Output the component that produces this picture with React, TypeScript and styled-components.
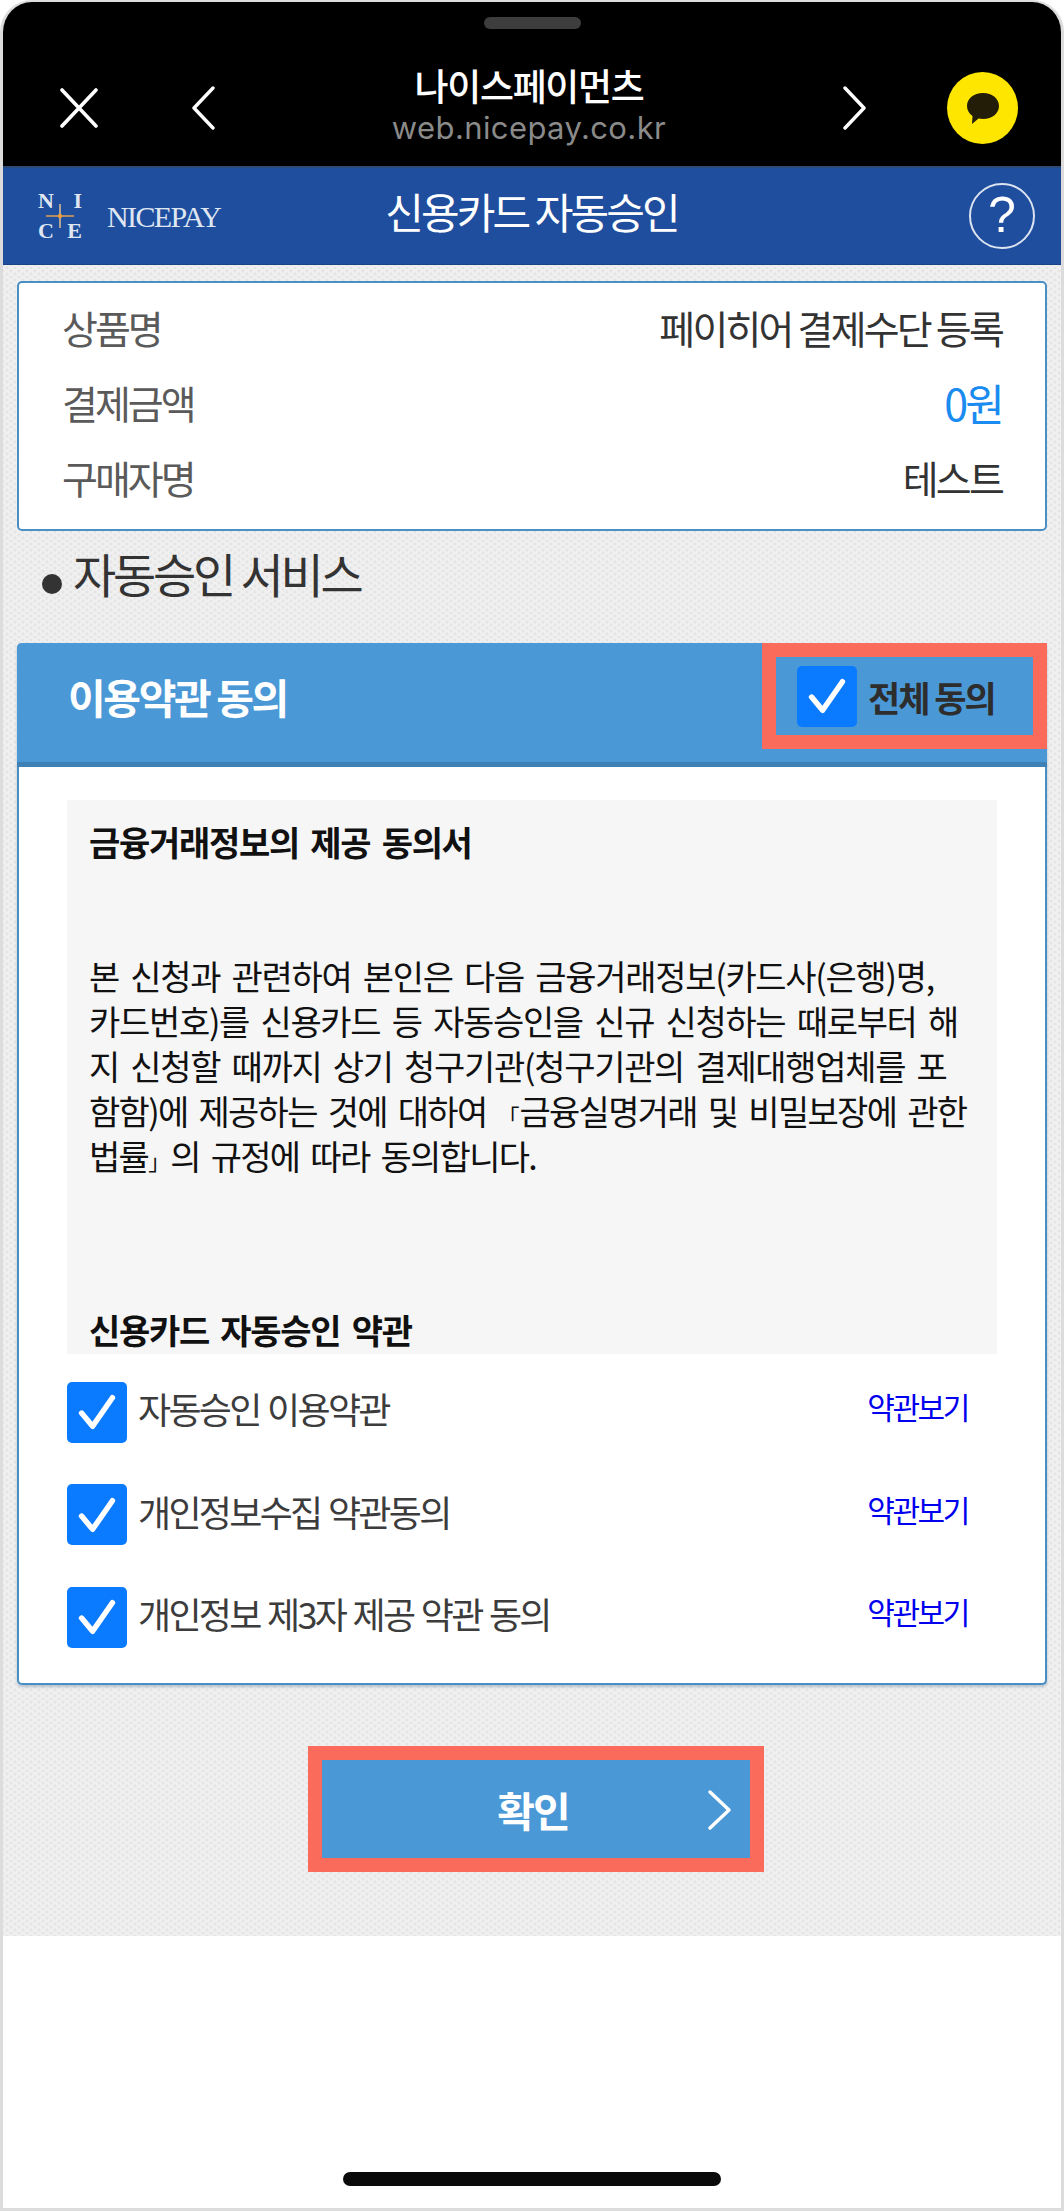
import React from 'react';
import styled, { createGlobalStyle } from 'styled-components';

const KR = `'Noto Sans CJK KR', 'Noto Sans', sans-serif`;

const GlobalStyle = createGlobalStyle`
  html, body {
    margin: 0;
    padding: 0;
    background: #fff;
  }
  * {
    box-sizing: border-box;
  }
`;

const Phone = styled.div`
  width: 1064px;
  height: 2211px;
  display: flex;
  flex-direction: column;
  border: solid #dcdcdc;
  border-width: 2px 3px 3px 3px;
  border-radius: 32px 32px 0 0;
  overflow: hidden;
  font-family: ${KR};
  background: #fff;
`;

const TopBar = styled.header`
  height: 164px;
  flex-shrink: 0;
  background: #000;
  padding-top: 15px;
  display: flex;
  flex-direction: column;
  align-items: center;
`;

const Pill = styled.div`
  width: 97px;
  height: 12px;
  border-radius: 6px;
  background: #3d3d3d;
`;

const TopRow = styled.div`
  width: 100%;
  display: flex;
  align-items: center;
  justify-content: space-between;
  padding: 0 43px 0 56px;
  margin-top: 37px;
`;

const IconGroup = styled.div<{ $gap: number }>`
  display: flex;
  align-items: center;
  gap: ${(p) => p.$gap}px;
`;

const SiteInfo = styled.div`
  display: flex;
  flex-direction: column;
  align-items: center;
  margin-top: -2px;
`;

const SiteName = styled.div`
  color: #fff;
  font-size: 37px;
  line-height: 43px;
  font-weight: 500;
  letter-spacing: -1.3px;
`;

const SiteUrl = styled.div`
  color: #8a8a8a;
  font-family: Inter, 'Liberation Sans', sans-serif;
  font-size: 31px;
  line-height: 42px;
  letter-spacing: 0.4px;
`;

const KakaoBadge = styled.div`
  width: 71px;
  height: 72px;
  border-radius: 50%;
  background: #ffe600;
  display: flex;
  align-items: center;
  justify-content: center;
`;

const TitleBar = styled.div`
  height: 99px;
  flex-shrink: 0;
  display: grid;
  grid-template-columns: 1fr auto 1fr;
  align-items: center;
  background: #1f4e9e;
  border-top: 2px solid #2c4a78;
  border-bottom: 1px solid #1a4389;
  padding: 0 26px 0 35px;
`;

const Logo = styled.div`
  display: flex;
  align-items: center;
  gap: 25px;
  color: #dfe6f2;
  font-family: 'Liberation Serif', serif;
`;

const LogoMark = styled.div`
  position: relative;
  width: 44px;
  height: 48px;
  display: grid;
  grid-template-columns: 1fr 1fr;
  align-content: space-between;
  font-size: 22px;
  line-height: 18px;
  font-weight: 700;
`;

const LogoLetter = styled.span<{ $right?: boolean }>`
  text-align: ${(p) => (p.$right ? 'right' : 'left')};
`;

const LogoStar = styled.svg`
  position: absolute;
  left: 8px;
  top: 12px;
`;

const LogoWord = styled.span`
  font-size: 30px;
  letter-spacing: -1.6px;
  line-height: 30px;
  margin-top: 2px;
`;

const PageTitle = styled.h1`
  margin: -10px 10px 0 0;
  color: #fff;
  font-size: 42px;
  line-height: 50px;
  font-weight: 400;
  letter-spacing: -2.9px;
`;

const HelpButton = styled.div`
  justify-self: end;
  width: 66px;
  height: 66px;
  border: 2px solid #dbe3f0;
  border-radius: 50%;
  color: #fff;
  font-family: 'Liberation Sans', sans-serif;
  font-size: 50px;
  line-height: 60px;
  text-align: center;
`;

const Body = styled.main`
  height: 1671px;
  flex-shrink: 0;
  padding: 16px 14px 0;
  background-color: #f0f0f0;
  background-image:
    radial-gradient(circle, #e5e5e5 1.3px, transparent 1.8px),
    radial-gradient(circle, #e5e5e5 1.3px, transparent 1.8px);
  background-size: 8px 6px;
  background-position: 0 0, 4px 3px;
`;

const SummaryCard = styled.section`
  height: 250px;
  padding: 0 43px 8px;
  display: flex;
  flex-direction: column;
  justify-content: center;
  gap: 21px;
  background: #fff;
  border: 2px solid #4a8fc4;
  border-radius: 5px;
`;

const SummaryRow = styled.div`
  display: flex;
  justify-content: space-between;
  align-items: center;
  height: 54px;
`;

const SummaryLabel = styled.span`
  color: #5a5a5a;
  font-size: 39px;
  letter-spacing: -3px;
`;

const SummaryValue = styled.span<{ $accent?: boolean }>`
  color: ${(p) => (p.$accent ? '#1a8cf0' : '#333')};
  font-size: ${(p) => (p.$accent ? 43 : 39)}px;
  letter-spacing: -2.8px;
`;

const SectionTitle = styled.h2`
  margin: 0;
  height: 112px;
  display: flex;
  align-items: center;
  gap: 11px;
  padding: 0 0 30px 25px;
  color: #333;
  font-size: 47px;
  font-weight: 400;
  letter-spacing: -3.2px;
`;

const Dot = styled.span`
  width: 20px;
  height: 20px;
  margin-top: 24px;
  border-radius: 50%;
  background: #333;
`;

const TermsCard = styled.section`
  height: 1042px;
  background: #fff;
  border: solid #4a8fc4;
  border-width: 0 2px 2px;
  border-radius: 5px;
  box-shadow: 0 2px 3px rgba(70, 110, 150, 0.35);
`;

const TermsHeader = styled.div`
  height: 124px;
  margin: 0 -2px;
  display: flex;
  justify-content: space-between;
  align-items: flex-start;
  padding-left: 51px;
  background: #4b98d7;
  border-bottom: 5px solid #3f80b5;
  border-radius: 5px 5px 0 0;
`;

const TermsTitle = styled.div`
  color: #fff;
  font-size: 41px;
  line-height: 106px;
  font-weight: 700;
  letter-spacing: -2.4px;
`;

const AgreeAll = styled.label`
  width: 285px;
  height: 106px;
  display: flex;
  align-items: center;
  gap: 11px;
  padding-left: 21px;
  border: 14px solid #fa6b5b;
  color: #2d2d2d;
  font-size: 35px;
  font-weight: 700;
  letter-spacing: -2px;
`;

const CheckBox = styled.span`
  width: 60px;
  height: 61px;
  flex-shrink: 0;
  display: flex;
  align-items: center;
  justify-content: center;
  border-radius: 5px;
  background: #0a7aff;
`;

const TermsContent = styled.div`
  padding: 33px 48px 0;
`;

const TermsText = styled.div`
  height: 554px;
  overflow: hidden;
  padding: 19px 22px 0;
  background: #f6f6f6;
  color: #111;
  font-size: 34px;
  line-height: 45px;
  letter-spacing: -1.3px;
  word-spacing: 5px;
  white-space: nowrap;
`;

const TermsHeading = styled.p<{ $gap?: number }>`
  margin: ${(p) => p.$gap ?? 0}px 0 0;
  font-weight: 700;
`;

const TermsParagraph = styled.p`
  margin: 89px 0 0;
`;

const TightLine = styled.span`
  letter-spacing: -1.7px;
`;

const SmallBracket = styled.span`
  font-size: 22px;
  line-height: 0;
  letter-spacing: 0;
`;

const AgreeList = styled.div`
  display: grid;
  gap: 42.5px;
  margin-top: 28px;
`;

const AgreeRow = styled.div`
  display: flex;
  align-items: center;
  gap: 11px;
  height: 60px;
`;

const AgreeLabel = styled.span`
  flex: 1;
  color: #3c3c3c;
  font-size: 36px;
  letter-spacing: -2.7px;
  word-spacing: 2px;
  margin-bottom: 8px;
`;

const AgreeLink = styled.a`
  margin: 0 29px 12px 0;
  color: #0000ee;
  font-size: 30px;
  letter-spacing: -2.4px;
`;

const ConfirmButton = styled.button`
  width: 456px;
  height: 126px;
  margin: 61px 0 0 291px;
  padding: 0 6px 0 0;
  position: relative;
  border: 14px solid #fa6b5b;
  background: #4b98d7;
  color: #fff;
  font-family: ${KR};
  font-size: 41px;
  font-weight: 700;
  letter-spacing: -2px;
`;

const ConfirmChevron = styled.svg`
  position: absolute;
  right: 18px;
  top: 30px;
`;

const HomeArea = styled.div`
  flex: 1;
  display: flex;
  align-items: flex-end;
  justify-content: center;
  padding-bottom: 22px;
`;

const HomeBar = styled.div`
  width: 378px;
  height: 14px;
  border-radius: 7px;
  background: #0a0a0a;
`;

const CheckMark = () => (
  <svg width="44" height="44" viewBox="0 0 40 40" fill="none">
    <path d="M6 21 L16 33 L34 7" stroke="#fff" strokeWidth="5" strokeLinecap="round" strokeLinejoin="round" />
  </svg>
);

const Chevron = ({ left }: { left?: boolean }) => (
  <svg width="24" height="44" viewBox="0 0 24 44" fill="none">
    <path
      d={left ? 'M22 2 L3 22 L22 42' : 'M2 2 L21 22 L2 42'}
      stroke="#fff"
      strokeWidth="3.4"
      strokeLinecap="round"
      strokeLinejoin="round"
    />
  </svg>
);

const agreements = ['자동승인 이용약관', '개인정보수집 약관동의', '개인정보 제3자 제공 약관 동의'];

const App = () => {
  return (
    <>
      <GlobalStyle />
      <Phone>
        <TopBar>
          <Pill />
          <TopRow>
            <IconGroup $gap={92}>
              <svg width="40" height="40" viewBox="0 0 40 40" fill="none">
                <path d="M3 2 L37 38 M37 2 L3 38" stroke="#fff" strokeWidth="3.6" strokeLinecap="round" />
              </svg>
              <Chevron left />
            </IconGroup>
            <SiteInfo>
              <SiteName>나이스페이먼츠</SiteName>
              <SiteUrl>web.nicepay.co.kr</SiteUrl>
            </SiteInfo>
            <IconGroup $gap={80}>
              <Chevron />
              <KakaoBadge>
                <svg width="36" height="36" viewBox="0 0 36 36" fill="#231d08">
                  <path d="M18 3 C27.500 3 34 8.800 34 16 C34 23.200 27.500 29 18 29 C16.500 29 15 28.800 13.500 28.500 L7 34 L7.500 26 C4 23.600 2 20 2 16 C2 8.800 8.500 3 18 3 Z" />
                </svg>
              </KakaoBadge>
            </IconGroup>
          </TopRow>
        </TopBar>
        <TitleBar>
          <Logo>
            <LogoMark>
              <LogoLetter>N</LogoLetter>
              <LogoLetter $right>I</LogoLetter>
              <LogoLetter>C</LogoLetter>
              <LogoLetter $right>E</LogoLetter>
              <LogoStar width="28" height="24" viewBox="0 0 28 24">
                <path d="M0 12 L28 12" stroke="#e3a04e" strokeWidth="1.4" />
                <path d="M14 0 L14 24" stroke="#f0c890" strokeWidth="1.4" />
                <circle cx="14" cy="12" r="2.200" fill="#f09a3c" />
              </LogoStar>
            </LogoMark>
            <LogoWord>NICEPAY</LogoWord>
          </Logo>
          <PageTitle>신용카드 자동승인</PageTitle>
          <HelpButton>?</HelpButton>
        </TitleBar>
        <Body>
          <SummaryCard>
            <SummaryRow>
              <SummaryLabel>상품명</SummaryLabel>
              <SummaryValue>페이히어 결제수단 등록</SummaryValue>
            </SummaryRow>
            <SummaryRow>
              <SummaryLabel>결제금액</SummaryLabel>
              <SummaryValue $accent>0원</SummaryValue>
            </SummaryRow>
            <SummaryRow>
              <SummaryLabel>구매자명</SummaryLabel>
              <SummaryValue>테스트</SummaryValue>
            </SummaryRow>
          </SummaryCard>
          <SectionTitle>
            <Dot />
            자동승인 서비스
          </SectionTitle>
          <TermsCard>
            <TermsHeader>
              <TermsTitle>이용약관 동의</TermsTitle>
              <AgreeAll>
                <CheckBox>
                  <CheckMark />
                </CheckBox>
                전체 동의
              </AgreeAll>
            </TermsHeader>
            <TermsContent>
              <TermsText>
                <TermsHeading>금융거래정보의 제공 동의서</TermsHeading>
                <TermsParagraph>
                  본 신청과 관련하여 본인은 다음 금융거래정보(카드사(은행)명,
                  <br />
                  카드번호)를 신용카드 등 자동승인을 신규 신청하는 때로부터 해
                  <br />
                  지 신청할 때까지 상기 청구기관(청구기관의 결제대행업체를 포
                  <br />
                  <TightLine>
                    함함)에 제공하는 것에 대하여 <SmallBracket>「</SmallBracket>금융실명거래 및 비밀보장에 관한
                  </TightLine>
                  <br />
                  <TightLine>
                    법률<SmallBracket>」</SmallBracket>의 규정에 따라 동의합니다.
                  </TightLine>
                </TermsParagraph>
                <TermsHeading $gap={129}>신용카드 자동승인 약관</TermsHeading>
              </TermsText>
              <AgreeList>
                {agreements.map((label) => (
                  <AgreeRow key={label}>
                    <CheckBox>
                      <CheckMark />
                    </CheckBox>
                    <AgreeLabel>{label}</AgreeLabel>
                    <AgreeLink>약관보기</AgreeLink>
                  </AgreeRow>
                ))}
              </AgreeList>
            </TermsContent>
          </TermsCard>
          <ConfirmButton>
            확인
            <ConfirmChevron width="24" height="40" viewBox="0 0 24 40" fill="none">
              <path d="M2 2 L21 20 L2 38" stroke="#fff" strokeWidth="3.4" strokeLinecap="round" strokeLinejoin="round" />
            </ConfirmChevron>
          </ConfirmButton>
        </Body>
        <HomeArea>
          <HomeBar />
        </HomeArea>
      </Phone>
    </>
  );
};

export default App;
